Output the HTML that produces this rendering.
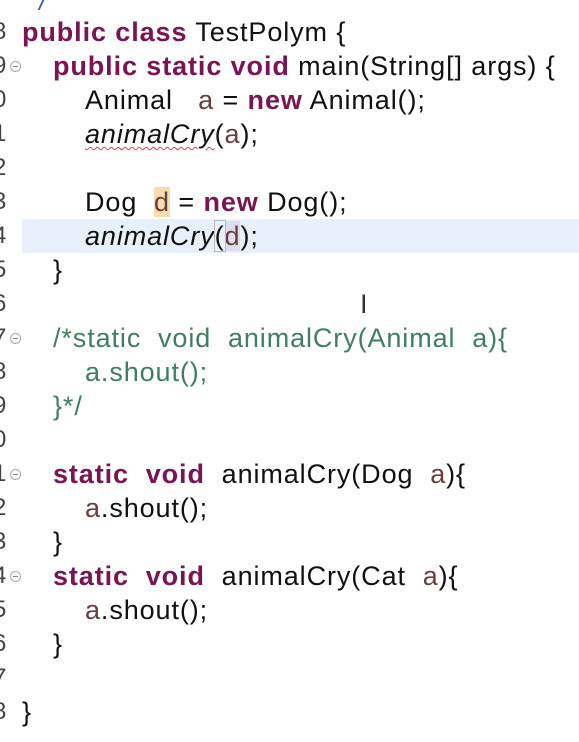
<!DOCTYPE html>
<html><head><meta charset="utf-8"><style>
body{margin:0;width:579px;height:742px;background:#fff;overflow:hidden;position:relative;font-family:"Liberation Sans",sans-serif;}
.l{position:absolute;left:0;height:34px;line-height:34px;font-size:27px;letter-spacing:0.9px;color:#111;white-space:pre;}
.n{position:absolute;left:-7px;height:34px;line-height:34px;font-size:24px;color:#444;}
.k{color:#7a1452;font-weight:bold;}
.c{color:#3f7f5f;}
.v{color:#6a3e3e;}
i{font-style:italic;}
.m{position:absolute;left:10px;width:9px;height:9px;border-radius:50%;border:1px solid #aaa;font-size:0;}
.m:after{content:"";position:absolute;left:2px;top:4px;width:5px;height:1px;background:#888;}
</style></head><body>
<div style="position:absolute;left:22px;top:219px;width:557px;height:34px;background:#e8f0fb"></div>
<div style="position:absolute;left:40px;top:0;width:4px;height:10px;border-left:2px solid #3a5fa0;transform:skewX(-25deg)"></div>
<div class="n" style="top:15px">8</div>
<div class="n" style="top:49px">9</div><div class="m" style="top:61px"></div>
<div class="n" style="top:83px">0</div>
<div class="n" style="top:117px">1</div>
<div class="n" style="top:151px">2</div>
<div class="n" style="top:185px">3</div>
<div class="n" style="top:219px">4</div>
<div class="n" style="top:253px">5</div>
<div class="n" style="top:287px">6</div>
<div class="n" style="top:321px">7</div><div class="m" style="top:333px"></div>
<div class="n" style="top:355px">8</div>
<div class="n" style="top:389px">9</div>
<div class="n" style="top:423px">0</div>
<div class="n" style="top:457px">1</div><div class="m" style="top:469px"></div>
<div class="n" style="top:491px">2</div>
<div class="n" style="top:525px">3</div>
<div class="n" style="top:559px">4</div><div class="m" style="top:571px"></div>
<div class="n" style="top:593px">5</div>
<div class="n" style="top:627px">6</div>
<div class="n" style="top:661px">7</div>
<div class="n" style="top:695px">8</div>

<div class="l" style="top:15px;left:22px"><span class="k">public class</span> TestPolym {</div>
<div class="l" style="top:49px;left:53px"><span class="k">public static void</span> main(String[] args) {</div>
<div class="l" style="top:83px;left:85px">Animal   <span class="v">a</span> = <span class="k">new</span> Animal();</div>
<div class="l" style="top:117px;left:85px"><i style="text-decoration:underline wavy #e04040;text-underline-offset:3px;text-decoration-thickness:1px">animalCry</i>(<span class="v">a</span>);</div>
<div class="l" style="top:185px;left:85px">Dog  <span class="v" style="background:#f7dcb0">d</span> = <span class="k">new</span> Dog();</div>
<div class="l" style="top:219px;left:85px"><i>animalCry</i><span style="outline:1px solid #bbb">(</span><span class="v" style="background:#dde">d</span>);</div>
<div class="l" style="top:253px;left:53px">}</div>
<div class="l" style="top:287px;left:360px;color:#333">I</div>
<div class="l c" style="top:321px;left:53px">/*static  void  animalCry(Animal  a){</div>
<div class="l c" style="top:355px;left:85px">a.shout();</div>
<div class="l c" style="top:389px;left:53px">}*/</div>
<div class="l" style="top:457px;left:53px"><span class="k">static  void</span>  animalCry(Dog  <span class="v">a</span>){</div>
<div class="l" style="top:491px;left:85px"><span class="v">a</span>.shout();</div>
<div class="l" style="top:525px;left:53px">}</div>
<div class="l" style="top:559px;left:53px"><span class="k">static  void</span>  animalCry(Cat  <span class="v">a</span>){</div>
<div class="l" style="top:593px;left:85px"><span class="v">a</span>.shout();</div>
<div class="l" style="top:627px;left:53px">}</div>
<div class="l" style="top:695px;left:22px">}</div>
</body></html>
